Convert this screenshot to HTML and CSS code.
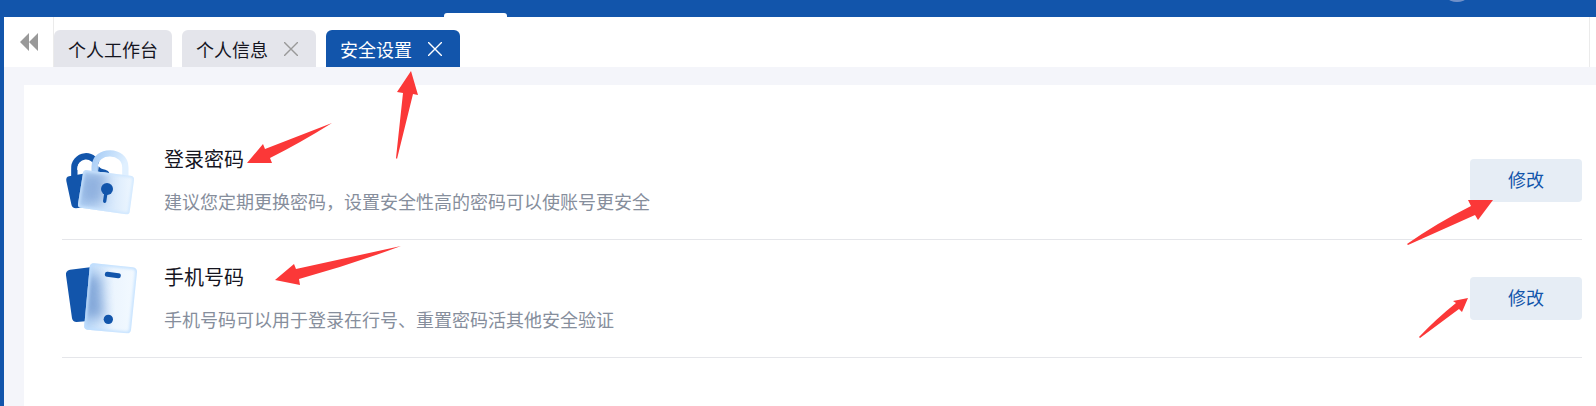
FILE: index.html
```html
<!DOCTYPE html>
<html lang="zh-CN">
<head>
  <meta charset="UTF-8">
  <meta name="viewport" content="width=device-width, initial-scale=1.0">
  <title>安全设置</title>
  <link rel="stylesheet" href="styles.css">
</head>
<body>

<header class="topbar">
  <span class="topbar-active"></span>
  <span class="avatar"></span>
</header>

<div class="main">
  <nav class="tabs">
    <button class="collapse" type="button" aria-label="收起">
      <svg width="18" height="18" viewBox="0 0 18 18"><path d="M9 0v18L0 9zM18 0v18L9 9z" fill="#999"/></svg>
    </button>
    <div class="tab-list">
      <div class="tab"><a href="#">个人工作台</a></div>
      <div class="tab">
        <a href="#">个人信息</a>
        <button class="close" type="button" aria-label="关闭">
          <svg width="14" height="14" viewBox="0 0 14 14"><path d="M0 0l14 14M14 0L0 14"/></svg>
        </button>
      </div>
      <div class="tab active">
        <a href="#">安全设置</a>
        <button class="close" type="button" aria-label="关闭">
          <svg width="14" height="14" viewBox="0 0 14 14"><path d="M0 0l14 14M14 0L0 14"/></svg>
        </button>
      </div>
    </div>
  </nav>

  <div class="card">
    <div class="row">
      <!-- two padlocks, the front one frosted -->
      <svg class="row-icon" viewBox="36 18 240 240">
        <defs>
          <linearGradient id="lockBody" x1="0" y1="0" x2="1" y2="0">
            <stop offset="0" stop-color="#b4d5f9"/>
            <stop offset="0.5" stop-color="#d3e6fb"/>
            <stop offset="1" stop-color="#f2f9ff"/>
          </linearGradient>
          <linearGradient id="lockRing" x1="0" y1="0" x2="1" y2="0.4">
            <stop offset="0" stop-color="#a8cdf6"/>
            <stop offset="1" stop-color="#e0f0ff"/>
          </linearGradient>
          <clipPath id="lockClip">
            <path d="M108 106L242 122Q254 124 252 136L239 230Q238 239 228 238L92 218Q82 216 84 206L99 114Q101 105 108 106Z"/>
          </clipPath>
          <filter id="frost" x="-60%" y="-60%" width="220%" height="220%">
            <feGaussianBlur stdDeviation="18"/>
          </filter>
          <filter id="soft"><feGaussianBlur stdDeviation="4"/></filter>
        </defs>
        <path d="M73 130v-28a35 35 0 0 1 70-6l6 14" fill="none" stroke="#1255ab" stroke-width="19"/>
        <path d="M57 124L166 104Q176 103 178 112L160 210L78 220Q66 220 64 208L49 138Q47 126 57 124Z" fill="#1255ab"/>
        <path d="M82 105v-5c0-30 48-30 52-2l-6 8z" fill="#fff"/>
        <path d="M143 116V95C144 56 215 56 217 96L214 118Z" fill="#fff"/>
        <path d="M146 94q8 10 20 10 10 2 12 10l-34-4z" fill="#1255ab"/>
        <path d="M134 114V95C136 40 226 43 226 97V124" fill="none" stroke="url(#lockRing)" stroke-width="19"/>
        <g clip-path="url(#lockClip)">
          <path d="M80 100h180v145H80z" fill="url(#lockBody)"/>
          <path d="M92 112L172 114L158 208L90 208Z" fill="#7fa3d6" opacity="0.75" filter="url(#frost)"/>
          <path d="M108 106L242 122Q254 124 252 136L239 230Q238 239 228 238L92 218Q82 216 84 206L99 114Q101 105 108 106Z" fill="none" stroke="#cbe5ff" stroke-width="9" filter="url(#soft)"/>
        </g>
        <circle cx="171" cy="162" r="18" fill="#1255ab"/>
        <path d="M168 172l-4 27" stroke="#1255ab" stroke-width="10" stroke-linecap="round"/>
      </svg>
      <div class="row-text">
        <h2>登录密码</h2>
        <p>建议您定期更换密码，设置安全性高的密码可以使账号更安全</p>
      </div>
      <button class="edit" type="button">修改</button>
    </div>

    <div class="row">
      <!-- phone -->
      <svg class="row-icon" viewBox="36 27 240 240">
        <defs>
          <linearGradient id="phoneBody" x1="0" y1="0" x2="1" y2="0">
            <stop offset="0" stop-color="#b4d5f9"/>
            <stop offset="0.55" stop-color="#ecf5fe"/>
            <stop offset="1" stop-color="#f4faff"/>
          </linearGradient>
          <clipPath id="phoneClip">
            <path d="M132 40L249 52Q262 54 261 67L243 240Q241 251 230 250L112 239Q101 237 103 225L119 51Q121 39 132 40Z"/>
          </clipPath>
        </defs>
        <path d="M60 59L150 48L150 210L80 216Q68 216 66 205L48 76Q46 62 60 59Z" fill="#1255ab"/>
        <g clip-path="url(#phoneClip)">
          <path d="M98 35h170v220H98z" fill="url(#phoneBody)"/>
          <path d="M104 76L150 76L160 204L100 204Z" fill="#6f97cf" opacity="0.8" filter="url(#frost)"/>
          <path d="M132 40L249 52Q262 54 261 67L243 240Q241 251 230 250L112 239Q101 237 103 225L119 51Q121 39 132 40Z" fill="none" stroke="#bfdfff" stroke-width="10" filter="url(#soft)"/>
        </g>
        <path d="M172 73l33 4" stroke="#1255ab" stroke-width="15" stroke-linecap="round"/>
        <circle cx="175" cy="208" r="14" fill="#1255ab"/>
      </svg>
      <div class="row-text">
        <h2>手机号码</h2>
        <p>手机号码可以用于登录在行号、重置密码活其他安全验证</p>
      </div>
      <button class="edit" type="button">修改</button>
    </div>
  </div>
</div>

<!-- red pointers over the page -->
<svg class="arrows arrows-left" width="440" height="300" viewBox="0 0 440 300">
  <path d="M411 71L397 92L403 93L396 158L397 159L413 94L418 95Z"/>
  <path d="M247 163L263 144L265 149L332 123Q300 143 270 158L272 163Z"/>
  <path d="M275 280L294 264L296 269L401 246Q350 265 299 279L300 285Z"/>
</svg>
<svg class="arrows arrows-right" width="196" height="350" viewBox="1400 0 196 350">
  <path d="M1493 200L1468 200L1471 206Q1437 223 1407 244L1408 245L1475 215L1478 220Z"/>
  <path d="M1468 298L1453 301L1456 303Q1436 319 1419 337L1420 338L1459 309L1462 312Z"/>
</svg>

</body>
</html>
```
FILE: styles.css
```css
* {
  box-sizing: border-box;
}

body {
  position: relative;
  margin: 0;
  min-height: 100vh;
  display: flex;
  flex-direction: column;
  font-family: "Noto Sans CJK SC", sans-serif;
  font-size: 18px;
  line-height: 24px;
  color: #15151f;
  background-color: #f4f5fa;
}

button {
  padding: 0;
  border: none;
  background: none;
  font: inherit;
  cursor: pointer;
}

.topbar {
  position: relative;
  height: 17px;
  background-color: #1255ab;
  overflow: hidden;
}

.topbar-active {
  position: absolute;
  left: 444px;
  bottom: 0;
  width: 63px;
  height: 4px;
  border-radius: 3px 3px 0 0;
  background-color: #fff;
}

.avatar {
  position: absolute;
  right: 122px;
  top: -32px;
  width: 34px;
  height: 34px;
  border-radius: 50%;
  background-color: #7191c9;
}

.main {
  flex: 1;
  display: flex;
  flex-direction: column;
  border-left: 4px solid #1255ab;
}

.tabs {
  display: flex;
  height: 50px;
  padding-right: 6px;
  background-color: #fff;
}

.collapse {
  width: 50px;
  border-right: 1px solid #ebebeb;
}

.collapse svg {
  display: block;
  margin: 0 auto;
}

.tab-list {
  flex: 1;
  display: flex;
  align-items: flex-end;
  gap: 10px;
  border-right: 1px solid #ebebeb;
}

.tab {
  display: flex;
  align-items: center;
  gap: 16px;
  height: 37px;
  padding: 0 14px;
  border-radius: 6px 6px 0 0;
  background-color: #e4e5eb;
}

.tab a {
  color: inherit;
  text-decoration: none;
}

.tab.active {
  color: #fff;
  background-color: #1255ab;
}

.close {
  width: 18px;
}

.close svg {
  display: block;
  fill: none;
  stroke: #999;
  stroke-width: 1.4;
}

.active .close svg {
  stroke: #fff;
}

.card {
  flex: 1;
  margin: 18px 0 0 20px;
  padding: 37px 14px 0 38px;
  background-color: #fff;
}

.row {
  display: flex;
  align-items: center;
  height: 118px;
  border-bottom: 1px solid #e5e6ea;
}

.row-icon {
  width: 80px;
  height: 80px;
  margin-right: 22px;
}

.row-text {
  flex: 1;
  padding-bottom: 2px;
}

.row-text h2 {
  margin: 0 0 18px;
  font-size: 20px;
  font-weight: normal;
}

.row-text p {
  margin: 0;
  color: #868e9c;
}

.edit {
  width: 112px;
  height: 43px;
  padding-bottom: 4px;
  border-radius: 4px;
  color: #1255ab;
  background-color: #e6edf5;
}

.arrows {
  position: absolute;
  top: 0;
  fill: #fb3838;
  pointer-events: none;
}

.arrows-left {
  left: 0;
}

.arrows-right {
  right: 0;
}
```
